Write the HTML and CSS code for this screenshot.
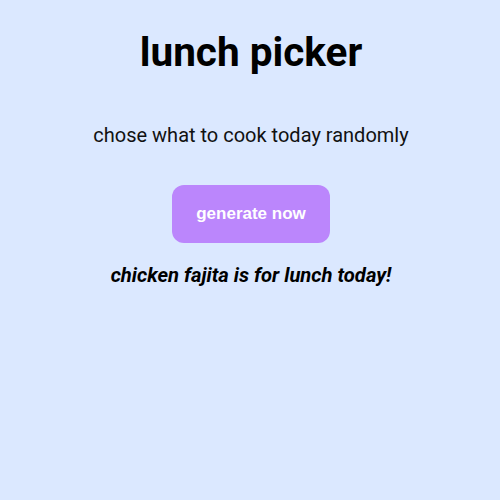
FILE: index.html
```html
<!DOCTYPE html>
<html>
<head>
<meta charset="utf-8">
<link rel="stylesheet" href="styles.css">
</head>
<body>
<main class="app">
  <h1 class="title">lunch picker</h1>
  <p class="subtitle">chose what to cook today randomly</p>
  <button class="generate">generate now</button>
  <p class="result">chicken fajita is for lunch today!</p>
</main>
</body>
</html>
```
FILE: styles.css
```css
html, body {
  margin: 0;
  padding: 0;
}
body {
  background: #dbe8ff;
  font-family: Roboto, "Liberation Sans", sans-serif;
  color: #000;
  width: 500px;
  height: 500px;
}
.app {
  display: flex;
  flex-direction: column;
  align-items: center;
  padding: 27px 0 0 2px;
}
.title {
  margin: 0;
  font-size: 40.5px;
  font-weight: 700;
  line-height: 50px;
}
.subtitle {
  margin: 46px 0 0;
  font-size: 20px;
  line-height: 24px;
  color: #111;
}
.generate {
  margin-top: 38px;
  width: 158px;
  height: 58px;
  border: none;
  border-radius: 12px;
  background: #bb86fc;
  color: #fff;
  font-family: "Liberation Sans", Arial, sans-serif;
  font-weight: 700;
  font-size: 17px;
}
.result {
  margin: 20px 0 0;
  font-size: 20.2px;
  font-weight: 700;
  font-style: italic;
  line-height: 24px;
}
```
